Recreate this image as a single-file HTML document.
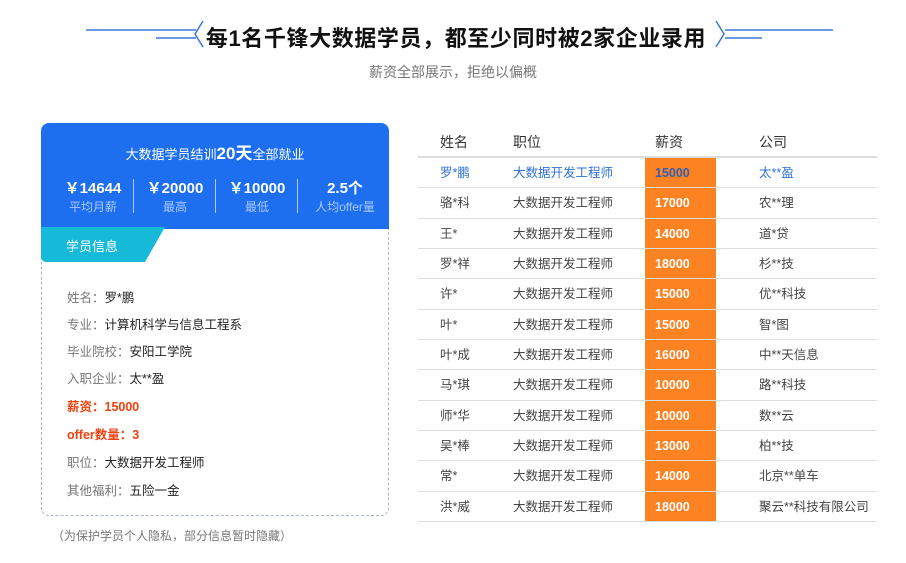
<!DOCTYPE html>
<html><head><meta charset="utf-8"><style>
*{margin:0;padding:0;box-sizing:border-box}
body{width:906px;height:563px;background:#fff;font-family:"Liberation Sans","Noto Sans CJK SC",sans-serif;position:relative;overflow:hidden;color:#333}
.a{position:absolute;white-space:nowrap}
.title{left:0;width:906px;top:21px;text-align:center;font-size:22px;font-weight:bold;color:#111;letter-spacing:0.6px;padding-left:6px}
.sub{left:0;width:906px;top:62px;text-align:center;font-size:14px;color:#777}
.card{left:41px;top:123px;width:348px;height:393px;border:1px dashed #a9b3cc;border-radius:8px}
.blue{left:41px;top:123px;width:348px;height:106px;background:#1d6ff0;border-radius:8px 8px 0 0;color:#fff}
.stat{position:absolute;top:54px;width:80px;text-align:center}
.stat b{display:block;font-size:15px}
.stat span{display:block;font-size:12px;color:#a9c8ff;margin-top:0}
.sep{position:absolute;top:56px;width:1px;height:34px;background:#a9c8ff}
.info{left:67px;font-size:12.5px;color:#777}
.info i{font-style:normal;color:#222}
.red{color:#f0400e!important;font-weight:bold}
.row{position:absolute;left:418px;width:459px;height:30.33px;border-bottom:1px solid #ddd;font-size:12.5px;color:#444}
.row div{position:absolute;top:0;height:100%;line-height:30px}
.c1{left:22px}.c2{left:95px}.c3{left:227px;width:71px;padding-left:10px;background:#fd8222;color:#fff;font-weight:bold}.c4{left:341px}
.hd{font-size:14px;color:#333;border-bottom:2px solid #ddd}
.hd .c3{background:none;color:#333;font-weight:normal}
.f{color:#2e6fd8}.f .c3{color:#2e5fb8}
</style></head><body>
<svg class="a" style="left:0;top:0" width="906" height="60">
<g stroke="#3a78d8" stroke-width="1.5" fill="none">
<line x1="86" y1="30" x2="196" y2="30"/><line x1="156" y1="38" x2="196" y2="38"/>
<polyline points="203,21 195,34 203,47"/>
<line x1="725" y1="30" x2="833" y2="30"/><line x1="725" y1="38" x2="762" y2="38"/>
<polyline points="716,21 724,34 716,47"/>
</g></svg>
<div class="a title">每1名千锋大数据学员，都至少同时被2家企业录用</div>
<div class="a sub">薪资全部展示，拒绝以偏概</div>
<div class="a card"></div>
<div class="a blue">
<div class="a" style="left:0;width:348px;top:16px;text-align:center;font-size:13px">大数据学员结训<b style="font-size:17px">20天</b>全部就业</div>
<div class="stat" style="left:12px"><b>￥14644</b><span>平均月薪</span></div>
<div class="sep" style="left:92px"></div>
<div class="stat" style="left:94px"><b>￥20000</b><span>最高</span></div>
<div class="sep" style="left:174px"></div>
<div class="stat" style="left:176px"><b>￥10000</b><span>最低</span></div>
<div class="sep" style="left:256px"></div>
<div class="stat" style="left:258px;width:92px"><b>2.5个</b><span>人均offer量</span></div>
</div>
<svg class="a" style="left:41px;top:227px" width="125" height="36"><path d="M0 0H124L104 35H6Q0 35 0 29Z" fill="#17b9d8"/></svg>
<div class="a" style="left:66px;top:236px;color:#fff;font-size:13px">学员信息</div>
<div class="a info" style="top:287px">姓名：<i>罗*鹏</i></div>
<div class="a info" style="top:314px">专业：<i>计算机科学与信息工程系</i></div>
<div class="a info" style="top:341px">毕业院校：<i>安阳工学院</i></div>
<div class="a info" style="top:368px">入职企业：<i>太**盈</i></div>
<div class="a info red" style="top:396px">薪资：15000</div>
<div class="a info red" style="top:424px">offer数量：3</div>
<div class="a info" style="top:452px">职位：<i>大数据开发工程师</i></div>
<div class="a info" style="top:480px">其他福利：<i>五险一金</i></div>
<div class="a" style="left:52px;top:527px;font-size:12px;color:#777">（为保护学员个人隐私，部分信息暂时隐藏）</div>

<div class="row hd" style="top:127px;height:31px"><div class="c1">姓名</div><div class="c2">职位</div><div class="c3">薪资</div><div class="c4">公司</div></div>
<div class="row f" style="top:158px"><div class="c1">罗*鹏</div><div class="c2">大数据开发工程师</div><div class="c3">15000</div><div class="c4">太**盈</div></div>
<div class="row" style="top:188.33px"><div class="c1">骆*科</div><div class="c2">大数据开发工程师</div><div class="c3">17000</div><div class="c4">农**理</div></div>
<div class="row" style="top:218.67px"><div class="c1">王*</div><div class="c2">大数据开发工程师</div><div class="c3">14000</div><div class="c4">道*贷</div></div>
<div class="row" style="top:249px"><div class="c1">罗*祥</div><div class="c2">大数据开发工程师</div><div class="c3">18000</div><div class="c4">杉**技</div></div>
<div class="row" style="top:279.33px"><div class="c1">许*</div><div class="c2">大数据开发工程师</div><div class="c3">15000</div><div class="c4">优**科技</div></div>
<div class="row" style="top:309.67px"><div class="c1">叶*</div><div class="c2">大数据开发工程师</div><div class="c3">15000</div><div class="c4">智*图</div></div>
<div class="row" style="top:340px"><div class="c1">叶*成</div><div class="c2">大数据开发工程师</div><div class="c3">16000</div><div class="c4">中**天信息</div></div>
<div class="row" style="top:370.33px"><div class="c1">马*琪</div><div class="c2">大数据开发工程师</div><div class="c3">10000</div><div class="c4">路**科技</div></div>
<div class="row" style="top:400.67px"><div class="c1">师*华</div><div class="c2">大数据开发工程师</div><div class="c3">10000</div><div class="c4">数**云</div></div>
<div class="row" style="top:431px"><div class="c1">吴*棒</div><div class="c2">大数据开发工程师</div><div class="c3">13000</div><div class="c4">柏**技</div></div>
<div class="row" style="top:461.33px"><div class="c1">常*</div><div class="c2">大数据开发工程师</div><div class="c3">14000</div><div class="c4">北京**单车</div></div>
<div class="row" style="top:491.67px"><div class="c1">洪*威</div><div class="c2">大数据开发工程师</div><div class="c3">18000</div><div class="c4">聚云**科技有限公司</div></div>
</body></html>
